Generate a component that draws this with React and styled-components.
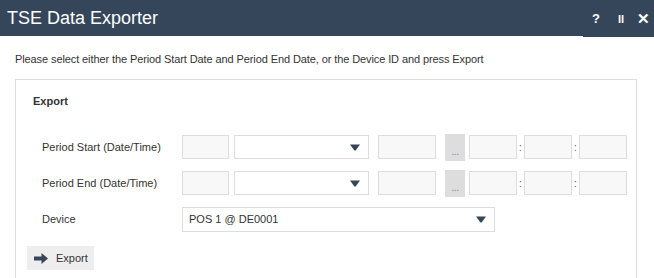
import React from "react";
import styled, { createGlobalStyle } from "styled-components";

const Global = createGlobalStyle`
  html, body { margin: 0; padding: 0; background: #fff; }
  body { font-family: "Liberation Sans", Arial, sans-serif; color: #333; }
  * { box-sizing: border-box; }
`;

const Window = styled.div`
  width: 654px;
  height: 278px;
  overflow: hidden;
  background: #fff;
`;

const TitleBar = styled.div`
  height: 36px;
  background: #36465a;
  display: flex;
  align-items: flex-start;
  justify-content: space-between;
`;

const Title = styled.div`
  color: #fff;
  font-size: 18px;
  line-height: 36px;
  padding-left: 7px;
`;

const TitleTools = styled.div`
  height: 37px;
  width: 71px;
  background: #36465a;
  display: flex;
  align-items: center;
  justify-content: flex-end;
  padding-right: 5px;
`;

const ToolIcon = styled.span`
  color: #fff;
  font-weight: bold;
  font-size: ${(p) => p.$size || 13}px;
  width: ${(p) => p.$w}px;
  margin-left: ${(p) => p.$ml || 0}px;
  text-align: center;
  line-height: 36px;
`;

const Body = styled.div`
  padding: 16px 17px 0 15px;
`;

const Intro = styled.p`
  margin: 0 0 13px 0;
  font-size: 11px;
  line-height: 14px;
  letter-spacing: -0.1px;
`;

const Panel = styled.div`
  border: 1px solid #ddd;
  border-bottom: none;
  padding: 14px 0 0 0;
  height: 210px;
`;

const PanelTitle = styled.div`
  font-weight: bold;
  font-size: 11px;
  line-height: 14px;
  padding-left: 17px;
  margin-bottom: 26px;
`;

const Rows = styled.div`
  display: flex;
  flex-direction: column;
  gap: 10px;
`;

const Row = styled.div`
  display: flex;
  align-items: center;
  height: ${(p) => p.$h || 26}px;
`;

const Label = styled.div`
  width: 166px;
  padding-left: 26px;
  font-size: 11px;
`;

const Box = styled.div`
  width: ${(p) => p.$w}px;
  height: ${(p) => p.$hgt || 24}px;
  border: 1px solid #ddd;
  background: #f8f8f8;
  margin-left: ${(p) => p.$ml || 0}px;
  flex-shrink: 0;
`;

const Select = styled.div`
  width: ${(p) => p.$w}px;
  height: ${(p) => p.$hgt || 24}px;
  border: 1px solid #ddd;
  background: #fff;
  margin-left: ${(p) => p.$ml || 0}px;
  display: flex;
  align-items: center;
  justify-content: space-between;
  padding: 0 8px 0 6px;
  font-size: 11px;
  color: #333;
  flex-shrink: 0;
`;

const Arrow = () => (
  <svg width="10" height="7" viewBox="0 0 10 7">
    <path d="M0 0.5 H10 L5.6 6.5 H4.4 Z" fill="#36465a" />
  </svg>
);

const DotsButton = styled.div`
  width: 20px;
  height: 27px;
  background: #ddd;
  margin-left: 9px;
  flex-shrink: 0;
  display: flex;
  align-items: flex-end;
  justify-content: center;
  font-size: 10px;
  color: #7a8a9a;
  line-height: 14px;
  letter-spacing: -0.5px;
  padding-bottom: 2px;
`;

const Colon = styled.span`
  width: 7px;
  text-align: center;
  font-size: 10px;
  color: #555;
  flex-shrink: 0;
`;

const ExportButton = styled.button`
  margin: 14px 0 0 11px;
  width: 67px;
  height: 24px;
  background: #eee;
  border: none;
  display: flex;
  align-items: center;
  gap: 8px;
  padding: 0 0 0 7px;
  font-family: "Liberation Sans", Arial, sans-serif;
  font-size: 11px;
  color: #333;
`;

const ExportArrow = () => (
  <svg width="14" height="11" viewBox="0 0 14 11">
    <path d="M0 3.5 H7.5 V0 L14 5.5 L7.5 11 V7.5 H0 Z" fill="#36465a" />
  </svg>
);

const DateRow = ({ label }) => (
  <Row $h={26}>
    <Label>{label}</Label>
    <Box $w={47} />
    <Select $w={135} $ml={5}>
      <span />
      <Arrow />
    </Select>
    <Box $w={58} $ml={9} />
    <DotsButton>...</DotsButton>
    <Box $w={48} $ml={4} />
    <Colon>:</Colon>
    <Box $w={48} />
    <Colon>:</Colon>
    <Box $w={48} />
  </Row>
);

export default function App() {
  return (
    <Window>
      <Global />
      <TitleBar>
        <Title>TSE Data Exporter</Title>
        <TitleTools>
          <ToolIcon $w={10} $size={13}>?</ToolIcon>
          <ToolIcon $w={10} $ml={15} $size={11}>II</ToolIcon>
          <ToolIcon $w={12} $ml={11} $size={15}>✕</ToolIcon>
        </TitleTools>
      </TitleBar>
      <Body>
        <Intro>
          Please select either the Period Start Date and Period End Date, or the Device ID and press Export
        </Intro>
        <Panel>
          <PanelTitle>Export</PanelTitle>
          <Rows>
            <DateRow label="Period Start (Date/Time)" />
            <DateRow label="Period End (Date/Time)" />
            <Row $h={26}>
              <Label>Device</Label>
              <Select $w={313} $hgt={25}>
                <span>POS 1 @ DE0001</span>
                <Arrow />
              </Select>
            </Row>
          </Rows>
          <ExportButton>
            <ExportArrow />
            Export
          </ExportButton>
        </Panel>
      </Body>
    </Window>
  );
}
